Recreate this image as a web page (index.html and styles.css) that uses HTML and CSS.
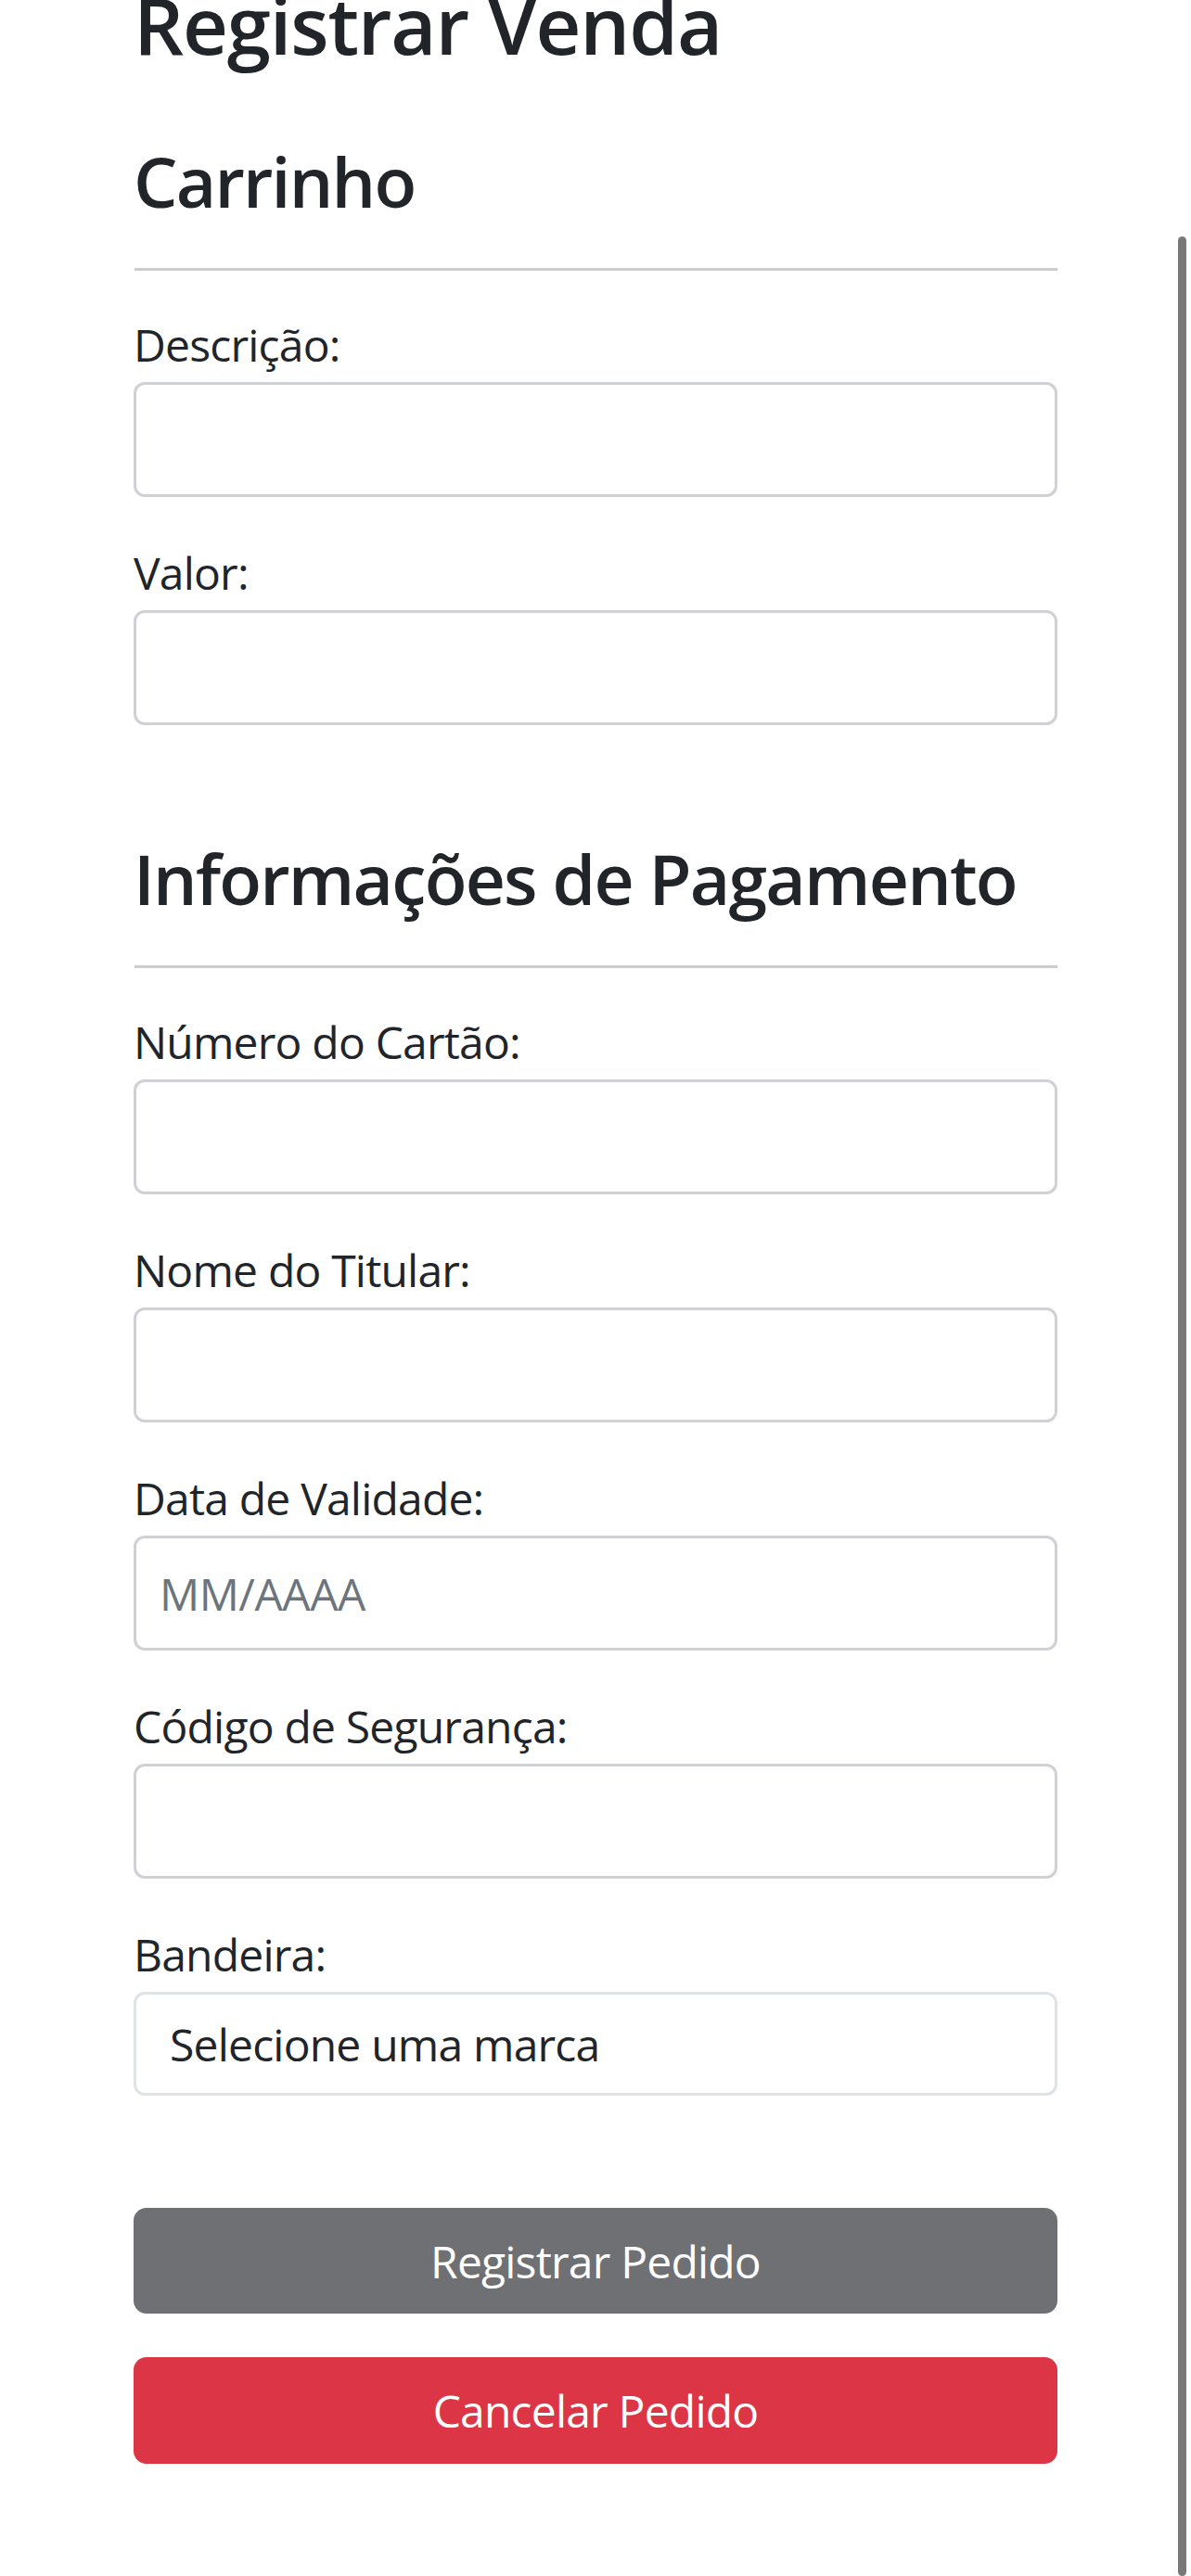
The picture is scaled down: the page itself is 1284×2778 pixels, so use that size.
FILE: index.html
```html
<!DOCTYPE html>
<html lang="pt-BR">
<head>
<meta charset="utf-8">
<title>Registrar Venda</title>
<link rel="stylesheet" href="styles.css">
</head>
<body>
<main class="page">
  <h1 class="title">Registrar Venda</h1>

  <section class="section">
    <h2 class="section-title">Carrinho</h2>
    <hr class="divider">
    <div class="field">
      <label class="label" for="descricao">Descrição:</label>
      <input class="input" id="descricao" type="text">
    </div>
    <div class="field">
      <label class="label" for="valor">Valor:</label>
      <input class="input" id="valor" type="text">
    </div>
  </section>

  <section class="section section-pay">
    <h2 class="section-title">Informações de Pagamento</h2>
    <hr class="divider">
    <div class="field">
      <label class="label" for="numero">Número do Cartão:</label>
      <input class="input" id="numero" type="text">
    </div>
    <div class="field">
      <label class="label" for="nome">Nome do Titular:</label>
      <input class="input" id="nome" type="text">
    </div>
    <div class="field">
      <label class="label" for="validade">Data de Validade:</label>
      <input class="input" id="validade" type="text" placeholder="MM/AAAA">
    </div>
    <div class="field">
      <label class="label" for="codigo">Código de Segurança:</label>
      <input class="input" id="codigo" type="text">
    </div>
    <div class="field field-last">
      <label class="label" for="bandeira">Bandeira:</label>
      <div class="select" id="bandeira">Selecione uma marca</div>
    </div>
  </section>

  <div class="actions">
    <button class="btn btn-secondary" type="button">Registrar Pedido</button>
    <button class="btn btn-danger" type="button">Cancelar Pedido</button>
  </div>
</main>
<div class="scrollbar"></div>
</body>
</html>
```

FILE: styles.css
```css
html, body {
  margin: 0;
  padding: 0;
  background: #ffffff;
}

body {
  font-family: "Open Sans", "Noto Sans", sans-serif;
  color: #212529;
  overflow: hidden;
  height: 2778px;
}

.page {
  width: 996px;
  margin-left: 144px;
  display: flex;
  flex-direction: column;
}

.title {
  margin: -25px 0 0 0;
  font-size: 85px;
  line-height: 102px;
  font-weight: 600;
  letter-spacing: -1.2px;
}

.section {
  display: flex;
  flex-direction: column;
}

.section-title {
  margin: 73px 0 0 0;
  font-size: 75px;
  line-height: 90px;
  font-weight: 600;
  letter-spacing: -1.8px;
}

.section-pay .section-title {
  margin-top: 74px;
}

.divider {
  margin: 49px 0 44px 1px;
  border: 0;
  border-top: 3px solid #cbcccd;
  height: 0;
}

.field {
  display: flex;
  flex-direction: column;
  margin-bottom: 46px;
}

.field-last {
  margin-bottom: 121px;
}

.label {
  font-size: 48px;
  line-height: 72px;
  margin-bottom: 4px;
  letter-spacing: -0.8px;
}

.input {
  box-sizing: border-box;
  height: 124px;
  width: 100%;
  border: 3px solid #cfd1d4;
  border-radius: 12px;
  padding: 0 25px;
  font-family: inherit;
  font-size: 48px;
  letter-spacing: -0.5px;
  color: #212529;
  background: #ffffff;
  outline: none;
}

.input::placeholder {
  color: #6c757d;
}

.select {
  box-sizing: border-box;
  height: 112px;
  border: 3px solid #e0e3e6;
  border-radius: 12px;
  padding: 0 36px;
  display: flex;
  align-items: center;
  font-size: 48px;
  letter-spacing: -0.8px;
}

.actions {
  display: flex;
  flex-direction: column;
  gap: 47px;
}

.btn {
  height: 114px;
  width: 100%;
  border: 0;
  border-radius: 14px;
  font-family: inherit;
  font-size: 48px;
  letter-spacing: -0.8px;
  color: #ffffff;
  padding: 0;
}

.btn-secondary {
  background: #6f7074;
}

.btn-danger {
  background: #dc3545;
  height: 115px;
}

.scrollbar {
  position: fixed;
  left: 1270px;
  top: 255px;
  width: 9px;
  height: 2523px;
  background: #787878;
  border-radius: 5px;
}
```
